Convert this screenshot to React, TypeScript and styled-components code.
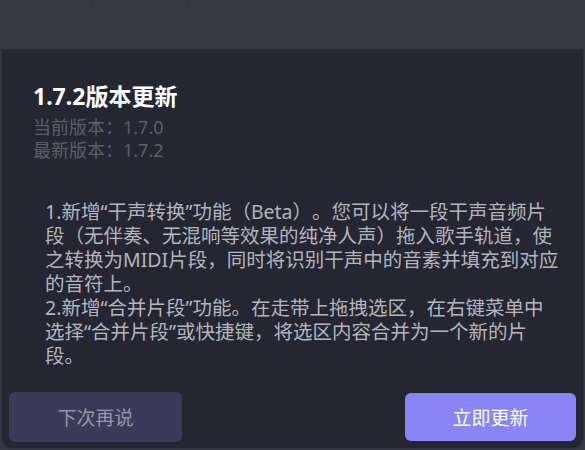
import React from "react";
import styled, { createGlobalStyle } from "styled-components";

const FONT = `"Noto Sans", "Noto Sans CJK SC", sans-serif`;

const GlobalStyle = createGlobalStyle`
  html, body { margin: 0; padding: 0; }
  body {
    background: #1d1f27;
    font-family: ${FONT};
  }
`;

const Page = styled.div`
  width: 585px;
  height: 450px;
  background: #363944;
  display: flex;
  flex-direction: column;
  overflow: hidden;
`;

const TopStrip = styled.div`
  height: 49px;
  flex: none;
  display: flex;
  margin-left: -4px;
`;

const StripCell = styled.div`
  width: 95.5px;
  height: 3px;
  flex: none;
  border-right: 1px solid #2c2f39;
`;

const Dialog = styled.div`
  flex: 1;
  margin: 0 1px 1px;
  background: #242731;
  border: 1px solid #2f3240;
  border-top: 1px solid #2c2f3a;
  border-radius: 0 0 12px 12px;
  display: flex;
  flex-direction: column;
  min-height: 0;
`;

const Header = styled.div`
  padding: 30px 32px 0 31px;
  display: flex;
  flex-direction: column;
`;

const Title = styled.h1`
  margin: 0;
  font-family: ${FONT};
  font-size: 23px;
  line-height: 32px;
  font-weight: 700;
  color: #ffffff;
`;

const VersionLine = styled.div`
  font-size: 18px;
  line-height: 23px;
  color: #5c5f6a;
  &:first-of-type { margin-top: 4px; }
`;

const Notes = styled.div`
  margin: 33px 0 0 43px;
  width: 524px;
  height: 174px;
  padding: 5px 9px 0 0;
  box-sizing: border-box;
  overflow-y: scroll;
  font-size: 19.5px;
  line-height: 24px;
  color: #b3b5be;
  text-spacing-trim: space-all;

  &::-webkit-scrollbar { width: 6px; }
  &::-webkit-scrollbar-track { background: transparent; }
  &::-webkit-scrollbar-thumb {
    background: #353845;
    border-radius: 3px;
  }
`;

const NoteItem = styled.p`
  margin: 0;
`;

const Footer = styled.div`
  margin-top: auto;
  display: flex;
  justify-content: space-between;
  align-items: center;
  padding: 0 7px 6px 7px;
`;

const Button = styled.button<{ $primary?: boolean }>`
  width: ${(p) => (p.$primary ? "171px" : "173px")};
  height: ${(p) => (p.$primary ? "48px" : "50px")};
  border: none;
  border-radius: 6px;
  font-family: ${FONT};
  font-size: 19px;
  background: ${(p) => (p.$primary ? "#8a84f6" : "#3b3a58")};
  color: ${(p) => (p.$primary ? "#ffffff" : "#9797ab")};
  cursor: pointer;
`;

const notes = [
  "1.新增“干声转换”功能（Beta）。您可以将一段干声音频片段（无伴奏、无混响等效果的纯净人声）拖入歌手轨道，使之转换为MIDI片段，同时将识别干声中的音素并填充到对应的音符上。",
  "2.新增“合并片段”功能。在走带上拖拽选区，在右键菜单中选择“合并片段”或快捷键，将选区内容合并为一个新的片段。",
  "3.优化了音高线编辑的交互体验，修复了若干已知问题，提升了软件的整体稳定性。",
];

export default function App() {
  return (
    <>
      <GlobalStyle />
      <Page>
        <TopStrip>
          {Array.from({ length: 7 }).map((_, i) => (
            <StripCell key={i} />
          ))}
        </TopStrip>
        <Dialog>
          <Header>
            <Title>1.7.2版本更新</Title>
            <VersionLine>当前版本：1.7.0</VersionLine>
            <VersionLine>最新版本：1.7.2</VersionLine>
          </Header>
          <Notes>
            {notes.map((n, i) => (
              <NoteItem key={i}>{n}</NoteItem>
            ))}
          </Notes>
          <Footer>
            <Button>下次再说</Button>
            <Button $primary>立即更新</Button>
          </Footer>
        </Dialog>
      </Page>
    </>
  );
}
